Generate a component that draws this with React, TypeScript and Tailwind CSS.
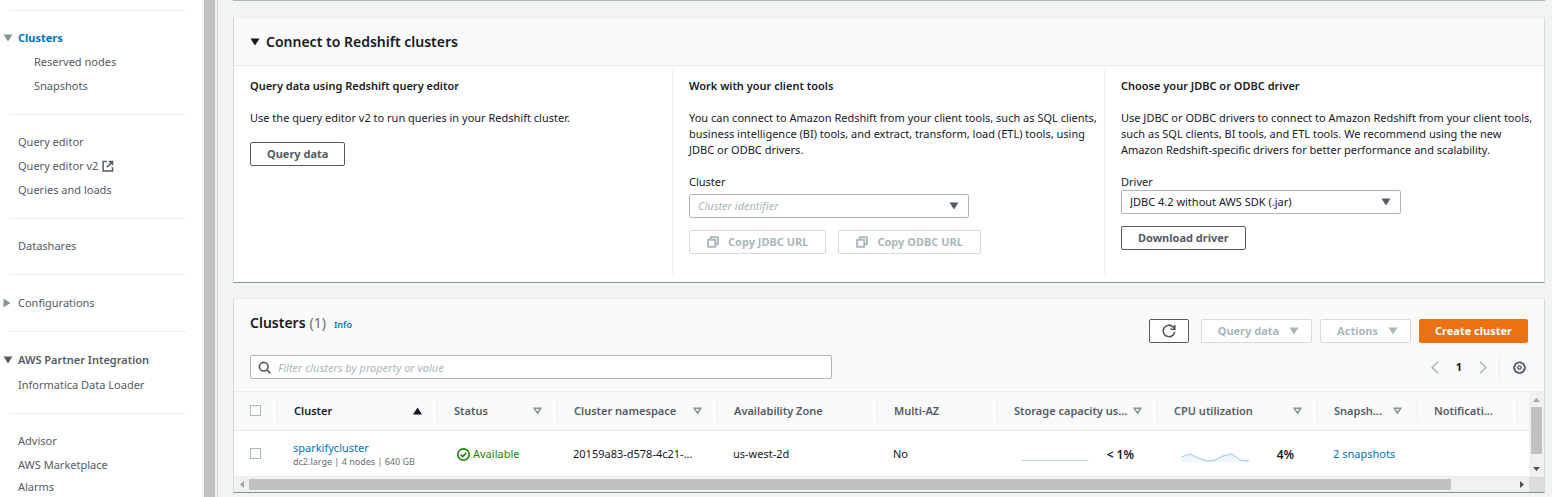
import React, { useState } from "react";

type IconProps = { className?: string };

const CaretDown = ({ className = "" }: IconProps) => (
  <svg className={className} width="10" height="8" viewBox="0 0 10 8" fill="currentColor" aria-hidden="true">
    <path d="M0.5 0.5h9L5 7.5z" />
  </svg>
);

const CaretRight = ({ className = "" }: IconProps) => (
  <svg className={className} width="8" height="10" viewBox="0 0 8 10" fill="currentColor" aria-hidden="true">
    <path d="M0.5 0.5v9L7.5 5z" />
  </svg>
);

const SortIcon = ({ className = "" }: IconProps) => (
  <svg className={className} width="9" height="8" viewBox="0 0 9 8" fill="none" stroke="currentColor" strokeWidth="1.6" aria-hidden="true">
    <path d="M1.2 1.2h6.6L4.5 6z" />
  </svg>
);

const SortUpIcon = () => (
  <svg className="shrink-0" width="9" height="8" viewBox="0 0 9 8" fill="currentColor" aria-hidden="true">
    <path d="M0 7.5h9L4.5 0.5z" />
  </svg>
);

const ExternalIcon = () => (
  <svg width="12" height="12" viewBox="0 0 16 16" fill="none" stroke="currentColor" strokeWidth="2" aria-hidden="true">
    <path d="M6.500 2H1.500v12.500H14V9.500M9 2h5v5M13.500 2.500L6.500 9.500" />
  </svg>
);

const CopyIcon = () => (
  <svg width="12" height="12" viewBox="0 0 16 16" fill="none" stroke="currentColor" strokeWidth="2.5" strokeLinejoin="round" aria-hidden="true">
    <path d="M1.500 5h9.500v9.500H1.500z" />
    <path d="M5 5V1.500h9.500V11H11" />
  </svg>
);

const RefreshIcon = () => (
  <svg width="14" height="14" viewBox="0 0 16 16" fill="none" stroke="currentColor" strokeWidth="1.8" aria-hidden="true">
    <path d="M14.500 9a6.600 6.600 0 1 1-1.800-5.700L14.500 5.500" />
    <path d="M14.600 1v5H9.500" />
  </svg>
);

const SearchIcon = ({ className = "" }: IconProps) => (
  <svg className={className} width="13" height="13" viewBox="0 0 16 16" fill="none" stroke="currentColor" strokeWidth="2" aria-hidden="true">
    <circle cx="7" cy="7" r="5.300" />
    <path d="M10.800 10.800L15.300 15.300" />
  </svg>
);

const GearIcon = () => (
  <svg width="13" height="13" viewBox="0 0 16 16" fill="none" stroke="currentColor" aria-hidden="true">
    <path
      strokeWidth="2"
      strokeLinejoin="round"
      d="M6.500 1.500h3l.8 1.500 1.700-.3 1.600 1.700-.3 1.700 1.500.9v2.500l-1.500.9.3 1.700-1.600 1.700-1.700-.3-.8 1.500h-3l-.8-1.500-1.700.3-1.600-1.700.3-1.700-1.500-.9V7l1.500-.9-.3-1.700L4 2.700l1.700.3z"
    />
    <circle cx="8" cy="8" r="2" strokeWidth="1.800" />
  </svg>
);

const Chevron = ({ left = false }: { left?: boolean }) => (
  <svg width="8" height="13" viewBox="0 0 8 13" fill="none" stroke="currentColor" strokeWidth="1.600" aria-hidden="true">
    <path d={left ? "M7 0.800L1.200 6.500L7 12.200" : "M1 0.800L6.800 6.500L1 12.200"} />
  </svg>
);

const CheckCircle = () => (
  <svg width="13" height="13" viewBox="0 0 16 16" fill="none" stroke="currentColor" strokeWidth="2" aria-hidden="true">
    <circle cx="8" cy="8" r="7" />
    <path d="M4.500 8L7 10.500L11.500 6" />
  </svg>
);

const NavLink = ({ children, nested = false }: { children: React.ReactNode; nested?: boolean }) => (
  <a href="#" className={`flex h-6 items-center gap-1 ${nested ? "pl-[34px]" : "pl-[18px]"}`}>
    {children}
  </a>
);

const NavRule = () => <hr className="mt-4 mr-4 mb-[15px] ml-[9px] border-t border-[#eaeded]" />;

function Sidebar() {
  return (
    <aside className="flex w-[218px] shrink-0 border-r border-[#d5dbdb] bg-white text-[#545b64]">
      <nav aria-label="Redshift" className="-mt-1.5 min-w-0 flex-1">
        <NavRule />
        <div className="flex h-6 items-center">
          <button aria-label="Toggle Clusters" className="flex w-[18px] pl-[3px] text-[#879596]">
            <CaretDown />
          </button>
          <a href="#" className="font-bold text-[#0073bb]">Clusters</a>
        </div>
        <NavLink nested>Reserved nodes</NavLink>
        <NavLink nested>Snapshots</NavLink>
        <NavRule />
        <NavLink>Query editor</NavLink>
        <NavLink>
          Query editor v2 <ExternalIcon />
        </NavLink>
        <NavLink>Queries and loads</NavLink>
        <NavRule />
        <NavLink>Datashares</NavLink>
        <NavRule />
        <div className="flex h-[25px] items-center">
          <button aria-label="Toggle Configurations" className="flex w-[18px] pl-[3px] text-[#879596]">
            <CaretRight />
          </button>
          <a href="#">Configurations</a>
        </div>
        <NavRule />
        <button className="flex h-[26px] items-center font-semibold">
          <span className="w-[18px] pl-[3px]">
            <CaretDown />
          </span>
          AWS Partner Integration
        </button>
        <NavLink>Informatica Data Loader</NavLink>
        <NavRule />
        <NavLink>Advisor</NavLink>
        <NavLink>AWS Marketplace</NavLink>
        <a href="#" className="flex h-5 items-center pl-[18px]">Alarms</a>
      </nav>
      <div className="w-[15px] bg-[#f1f1f1] px-[2px]">
        <div className="h-full bg-[#c1c1c1]" />
      </div>
    </aside>
  );
}

const buttonBase = "flex h-6 items-center justify-center rounded-[2px] border font-bold";
const buttonNormal = "border-[#545b64] bg-white text-[#545b64]";
const buttonDisabled = "border-[#d5dbdb] bg-white text-[#aab7b8]";

const card = "border border-t-[#eaeded] border-r-[#d5dbdb] border-b-[#879596] border-l-[#d5dbdb] bg-white";

function Select({ id, options, placeholder = false }: { id: string; options: string[]; placeholder?: boolean }) {
  return (
    <div className="relative w-[280px] max-w-full">
      <select
        id={id}
        className={`block h-6 w-full appearance-none rounded-[2px] border border-[#aab7b8] bg-white px-2 ${
          placeholder ? "text-[#aab7b8] italic" : ""
        }`}
      >
        {options.map((option) => (
          <option key={option}>{option}</option>
        ))}
      </select>
      <CaretDown className="pointer-events-none absolute top-2 right-[10px] text-[#545b64]" />
    </div>
  );
}

function ConnectCard() {
  const [open, setOpen] = useState(true);
  return (
    <section className={card}>
      <h2 className="border-b border-[#eaeded] bg-[#fafafa]">
        <button className="flex h-[47px] w-full items-center gap-[6px] px-4 text-sm font-semibold" onClick={() => setOpen(!open)}>
          <CaretDown />
          Connect to Redshift clusters
        </button>
      </h2>
      {open && (
        <div className="grid grid-cols-[439fr_432fr_439fr] pt-1 pb-2">
          <div className="border-r border-[#eaeded] px-4 pt-2 pb-5">
            <h3 className="font-semibold">Query data using Redshift query editor</h3>
            <p className="mt-4">Use the query editor v2 to run queries in your Redshift cluster.</p>
            <button className={`${buttonBase} ${buttonNormal} mt-4 px-4`}>Query data</button>
          </div>
          <div className="border-r border-[#eaeded] pt-2 pr-0 pb-5 pl-4">
            <h3 className="font-semibold">Work with your client tools</h3>
            <p className="mt-4">
              You can connect to Amazon Redshift from your client tools, such as SQL clients, business intelligence (BI)
              tools, and extract, transform, load (ETL) tools, using JDBC or ODBC drivers.
            </p>
            <label htmlFor="cluster" className="mt-4 mb-1 block">Cluster</label>
            <Select id="cluster" options={["Cluster identifier"]} placeholder />
            <div className="mt-3 flex gap-3">
              <button disabled className={`${buttonBase} ${buttonDisabled} gap-[9px] px-[17px]`}>
                <CopyIcon />
                Copy JDBC URL
              </button>
              <button disabled className={`${buttonBase} ${buttonDisabled} gap-[9px] px-[17px]`}>
                <CopyIcon />
                Copy ODBC URL
              </button>
            </div>
          </div>
          <div className="pt-2 pr-2 pb-5 pl-4">
            <h3 className="font-semibold">Choose your JDBC or ODBC driver</h3>
            <p className="mt-4">
              Use JDBC or ODBC drivers to connect to Amazon Redshift from your client tools, such as SQL clients, BI
              tools, and ETL tools. We recommend using the new Amazon Redshift-specific drivers for better performance
              and scalability.
            </p>
            <label htmlFor="driver" className="mt-4 block">Driver</label>
            <Select id="driver" options={["JDBC 4.2 without AWS SDK (.jar)"]} />
            <button className={`${buttonBase} ${buttonNormal} mt-3 px-4`}>Download driver</button>
          </div>
        </div>
      )}
    </section>
  );
}

const columns: { title: string; width: string; sort?: "none" | "up" }[] = [
  { title: "Cluster", width: "w-[160px]", sort: "up" },
  { title: "Status", width: "w-[120px]", sort: "none" },
  { title: "Cluster namespace", width: "w-[160px]", sort: "none" },
  { title: "Availability Zone", width: "w-[160px]" },
  { title: "Multi-AZ", width: "w-[120px]" },
  { title: "Storage capacity us...", width: "w-[160px]", sort: "none" },
  { title: "CPU utilization", width: "w-[160px]", sort: "none" },
  { title: "Snapsh...", width: "w-[100px]", sort: "none" },
  { title: "Notificati...", width: "w-[100px]" },
];

const Checkbox = ({ label }: { label: string }) => (
  <input
    type="checkbox"
    aria-label={label}
    className="block h-[11px] w-[11px] appearance-none border border-[#aab7b8] bg-white checked:bg-[#0073bb]"
  />
);

function ClusterTable() {
  return (
    <table className="w-full table-fixed border-collapse text-left">
      <thead>
        <tr className="h-[38px] border-b border-[#eaeded] bg-[#fafafa] text-[#545b64]">
          <th className="w-[44px] p-0">
            <div className="flex h-5 items-center border-r border-[#eaeded] pl-4">
              <Checkbox label="Select all clusters" />
            </div>
          </th>
          {columns.map(({ title, width, sort }) => (
            <th key={title} className={`${width} p-0 font-semibold`}>
              <div
                className={`flex h-5 items-center justify-between border-r border-[#eaeded] pr-[15px] pl-4 whitespace-nowrap ${
                  sort === "up" ? "text-[#16191f]" : ""
                }`}
              >
                {title}
                {sort === "none" && <SortIcon className="shrink-0 text-[#879596]" />}
                {sort === "up" && <SortUpIcon />}
              </div>
            </th>
          ))}
          <th className="p-0" />
        </tr>
      </thead>
      <tbody>
        <tr className="h-[46px] border-b border-[#eaeded]">
          <td className="p-0 pl-4">
            <Checkbox label="Select sparkifycluster" />
          </td>
          <td className="p-0 pt-0.5 pl-[15px] whitespace-nowrap">
            <a href="#" className="block leading-[14px] text-[#0073bb]">sparkifycluster</a>
            <span className="block text-[9px] leading-[13px] text-[#687078]">dc2.large | 4 nodes | 640 GB</span>
          </td>
          <td className="p-0 pt-0.5 pl-[19px]">
            <span className="flex items-center gap-[3px] text-[#1d8102]">
              <CheckCircle />
              Available
            </span>
          </td>
          <td className="p-0 pt-0.5 pl-[15px] whitespace-nowrap">20159a83-d578-4c21-...</td>
          <td className="p-0 pt-0.5 pl-[15px]">us-west-2d</td>
          <td className="p-0 pt-0.5 pl-[15px]">No</td>
          <td className="p-0 pt-1 pr-[24px] pl-[23px]">
            <div className="flex items-center justify-between text-xs font-semibold">
              <svg width="68" height="16" viewBox="0 0 68 16" fill="none" aria-hidden="true">
                <path d="M0.500 13.500H67.500" stroke="#c3dbf5" />
              </svg>
              &lt; 1%
            </div>
          </td>
          <td className="p-0 pt-1 pr-[24px] pl-[23px]">
            <div className="flex items-center justify-between text-xs font-semibold">
              <svg width="68" height="16" viewBox="0 0 68 16" fill="none" aria-hidden="true">
                <path d="M0.500 10L9 7L17 11L26 14L34 13L42 9L51 7L59 13L68 14V15H0.500z" fill="#eff6fe" />
                <path d="M0.500 10L9 7L17 11L26 14L34 13L42 9L51 7L59 13L68 14" stroke="#98c5f0" />
              </svg>
              4%
            </div>
          </td>
          <td className="p-0 pt-0.5 pl-[15px] whitespace-nowrap">
            <a href="#" className="text-[#0073bb]">2 snapshots</a>
          </td>
          <td className="p-0" />
          <td className="p-0" />
        </tr>
      </tbody>
    </table>
  );
}

function ClustersCard() {
  return (
    <section className={`${card} mt-[15px]`}>
      <div className="bg-[#fafafa] px-4 pt-3 pb-3">
        <div className="flex items-start justify-between">
          <h2 className="flex items-baseline text-sm leading-6 font-semibold">
            Clusters
            <span className="ml-1 font-normal text-[#687078]">(1)</span>
            <a href="#" className="ml-2 text-[9px] text-[#0073bb]">Info</a>
          </h2>
          <div className="flex gap-2 pt-2">
            <button aria-label="Refresh" className={`${buttonBase} ${buttonNormal} mr-1 px-3`}>
              <RefreshIcon />
            </button>
            <button disabled className={`${buttonBase} ${buttonDisabled} gap-[10px] pr-3 pl-4`}>
              Query data
              <CaretDown />
            </button>
            <button disabled className={`${buttonBase} ${buttonDisabled} gap-[10px] pr-3 pl-4`}>
              Actions
              <CaretDown />
            </button>
            <button className={`${buttonBase} border-[#ec7211] bg-[#ec7211] px-[15px] text-white`}>Create cluster</button>
          </div>
        </div>
        <div className="mt-3 flex items-center justify-between">
          <div className="relative w-[582px] max-w-full">
            <SearchIcon className="pointer-events-none absolute top-[6px] left-2 text-[#545b64]" />
            <input
              type="search"
              aria-label="Filter clusters"
              placeholder="Filter clusters by property or value"
              className="block h-6 w-full rounded-[2px] border border-[#aab7b8] bg-white pr-2 pl-[27px] placeholder:text-[#aab7b8] placeholder:italic"
            />
          </div>
          <div className="flex h-6 items-center">
            <button disabled aria-label="Previous page" className="text-[#aab7b8]">
              <Chevron left />
            </button>
            <button aria-label="Page 1" className="w-10 text-center font-bold">1</button>
            <button disabled aria-label="Next page" className="text-[#aab7b8]">
              <Chevron />
            </button>
            <div className="ml-3 h-6 border-l border-[#eaeded]" />
            <button aria-label="Preferences" className="mr-[2px] ml-[13px] text-[#545b64]">
              <GearIcon />
            </button>
          </div>
        </div>
      </div>
      <div className="flex border-t border-[#eaeded]">
        <div className="min-w-0 flex-1 overflow-hidden">
          <ClusterTable />
        </div>
        <div className="flex w-[15px] shrink-0 flex-col items-center bg-[#f1f1f1] py-[6px]">
          <svg width="7" height="4" viewBox="0 0 7 4" aria-hidden="true">
            <path d="M0 4h7L3.500 0z" fill="#a3a3a3" />
          </svg>
          <div className="mt-[5px] mb-auto h-[47px] w-[11px] bg-[#c1c1c1]" />
          <svg width="7" height="4" viewBox="0 0 7 4" aria-hidden="true">
            <path d="M0 0h7L3.500 4z" fill="#505050" />
          </svg>
        </div>
      </div>
      <div className="flex h-[15px] bg-[#f1f1f1]">
        <div className="flex w-[15px] items-center justify-center">
          <svg width="4" height="7" viewBox="0 0 4 7" aria-hidden="true">
            <path d="M4 0v7L0 3.500z" fill="#a3a3a3" />
          </svg>
        </div>
        <div className="flex-1 py-[2px]">
          <div className="h-[11px] w-[95%] bg-[#c1c1c1]" />
        </div>
        <div className="flex w-[15px] items-center justify-center">
          <svg width="4" height="7" viewBox="0 0 4 7" aria-hidden="true">
            <path d="M0 0v7L4 3.500z" fill="#505050" />
          </svg>
        </div>
        <div className="w-[15px] bg-[#dcdcdc]" />
      </div>
    </section>
  );
}

export default function App() {
  return (
    <div className="flex min-h-screen bg-[#f2f3f3] font-['Noto_Sans',sans-serif] text-[11px] leading-4 text-[#16191f]">
      <Sidebar />
      <main className="min-w-0 flex-1 pr-[7px] pl-[15px]">
        <div className="mb-4 border-t border-[#aab7b8]" />
        <ConnectCard />
        <ClustersCard />
      </main>
    </div>
  );
}
